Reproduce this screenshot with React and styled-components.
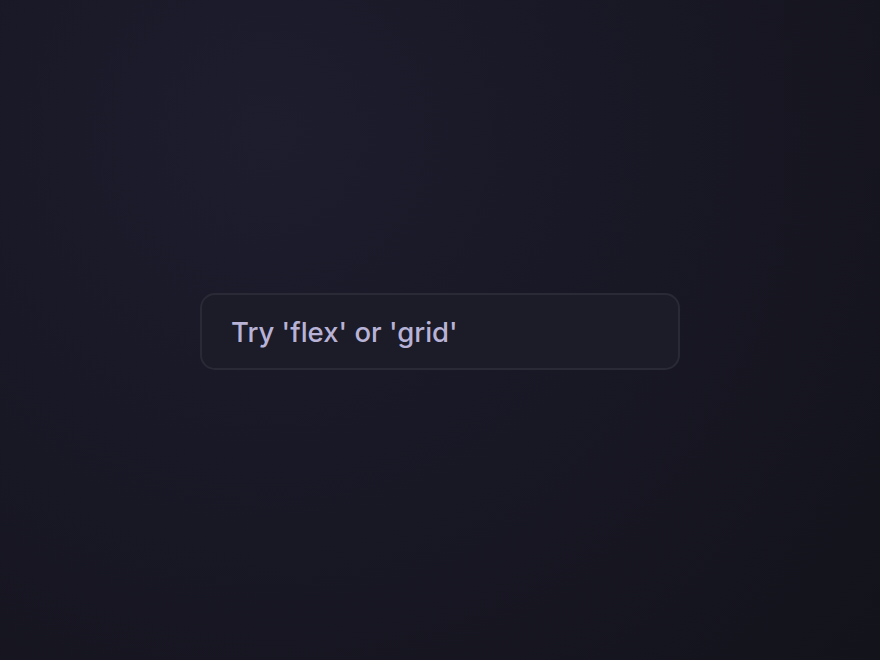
import React from "react";
import styled, { createGlobalStyle } from "styled-components";

const GlobalStyle = createGlobalStyle`
  html, body {
    margin: 0;
    padding: 0;
    height: 100%;
  }
  #root {
    height: 100%;
  }
`;

const Page = styled.div`
  width: 100vw;
  height: 100vh;
  display: flex;
  align-items: center;
  justify-content: center;
  background: radial-gradient(
    circle at 30% 20%,
    #1e1d2e 0%,
    #191826 40%,
    #13131b 100%
  );
  font-family: Inter, "Noto Sans", sans-serif;
`;

const SearchInput = styled.input`
  box-sizing: border-box;
  width: 480px;
  height: 77px;
  margin-top: 2px;
  padding: 2px 28px 0 29px;
  border: 2px solid #2a2936;
  border-radius: 15px;
  background: #1c1b28;
  color: #e4e1f5;
  font-family: inherit;
  font-size: 27.5px;
  font-weight: 500;
  outline: none;

  &::placeholder {
    color: #b8b3d6;
    opacity: 1;
  }
`;

function App() {
  return (
    <>
      <GlobalStyle />
      <Page>
        <SearchInput placeholder="Try 'flex' or 'grid'" />
      </Page>
    </>
  );
}

export default App;
